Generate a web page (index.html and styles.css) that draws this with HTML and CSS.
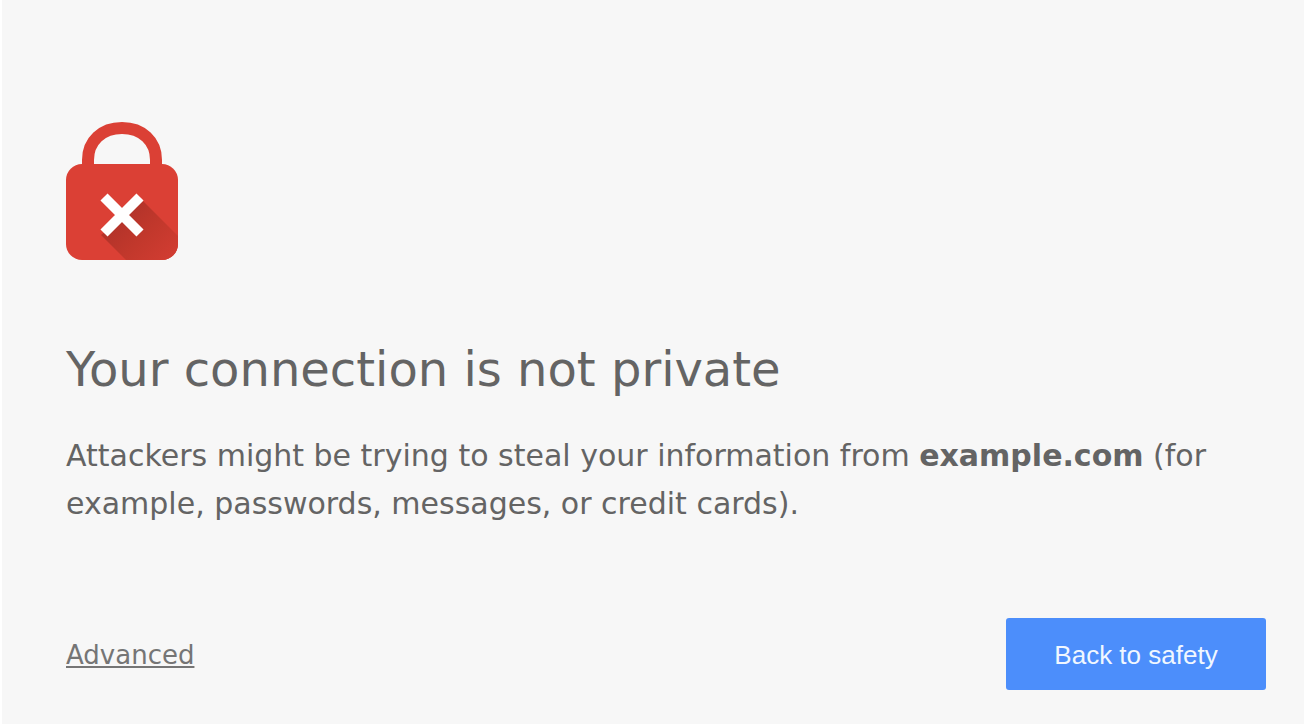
FILE: index.html
```html
<!DOCTYPE html>
<html lang="en">
<head>
<meta charset="utf-8">
<meta name="viewport" content="width=device-width, initial-scale=1">
<title>Privacy error</title>
<link rel="stylesheet" href="styles.css">
</head>
<body>
<main class="interstitial">
  <svg class="lock-icon" viewBox="0 0 112 138" aria-hidden="true">
    <defs>
      <linearGradient id="shade" gradientUnits="userSpaceOnUse" x1="56" y1="93" x2="100" y2="137">
        <stop offset="0.1" stop-color="#b5342a"/>
        <stop offset="0.5" stop-color="#c2382c"/>
        <stop offset="1" stop-color="#d03c31"/>
      </linearGradient>
      <clipPath id="body"><rect y="42" width="112" height="96" rx="16"/></clipPath>
    </defs>
    <path d="M22 48V38C22 19 36 6 56 6s34 13 34 32v10" fill="none" stroke="#db4035" stroke-width="12"/>
    <rect y="42" width="112" height="96" rx="16" fill="#db4035"/>
    <path d="M77 79L118 120V144H66L35 113Z" fill="url(#shade)" clip-path="url(#body)"/>
    <path d="M38 75l36 36M74 75l-36 36" stroke="#fff" stroke-width="10"/>
  </svg>
  <h1 class="title">Your connection is not private</h1>
  <p class="message">Attackers might be trying to steal your information from <strong>example.com</strong> (for example, passwords, messages, or credit cards).</p>
  <div class="actions">
    <a class="details-link" href="#advanced">Advanced</a>
    <button class="safety-button" type="button">Back to safety</button>
  </div>
</main>
</body>
</html>
```
FILE: styles.css
```css
body {
  margin: 0;
  border-left: 2px solid #fff;
  background: #f7f7f7;
  color: #646464;
  font-family: "DejaVu Sans", sans-serif;
}

.interstitial {
  padding: 122px 38px 34px 64px;
}

.lock-icon {
  display: block;
  width: 112px;
  height: 138px;
}

.title {
  margin: 80px 0 0;
  font-size: 48px;
  font-weight: 400;
  line-height: 58px;
}

.message {
  margin: 34px 0 0;
  font-size: 30px;
  line-height: 48px;
}

.actions {
  display: flex;
  align-items: baseline;
  justify-content: space-between;
  margin-top: 90px;
}

.details-link {
  color: #757575;
  font-size: 26px;
}

.safety-button {
  min-width: 260px;
  padding: 22px 48px 20px;
  border: 0;
  border-radius: 3px;
  background: #4c8efb;
  color: #f0f7ff;
  font-family: "Liberation Sans", Arial, sans-serif;
  font-size: 26px;
  line-height: 30px;
}
```
